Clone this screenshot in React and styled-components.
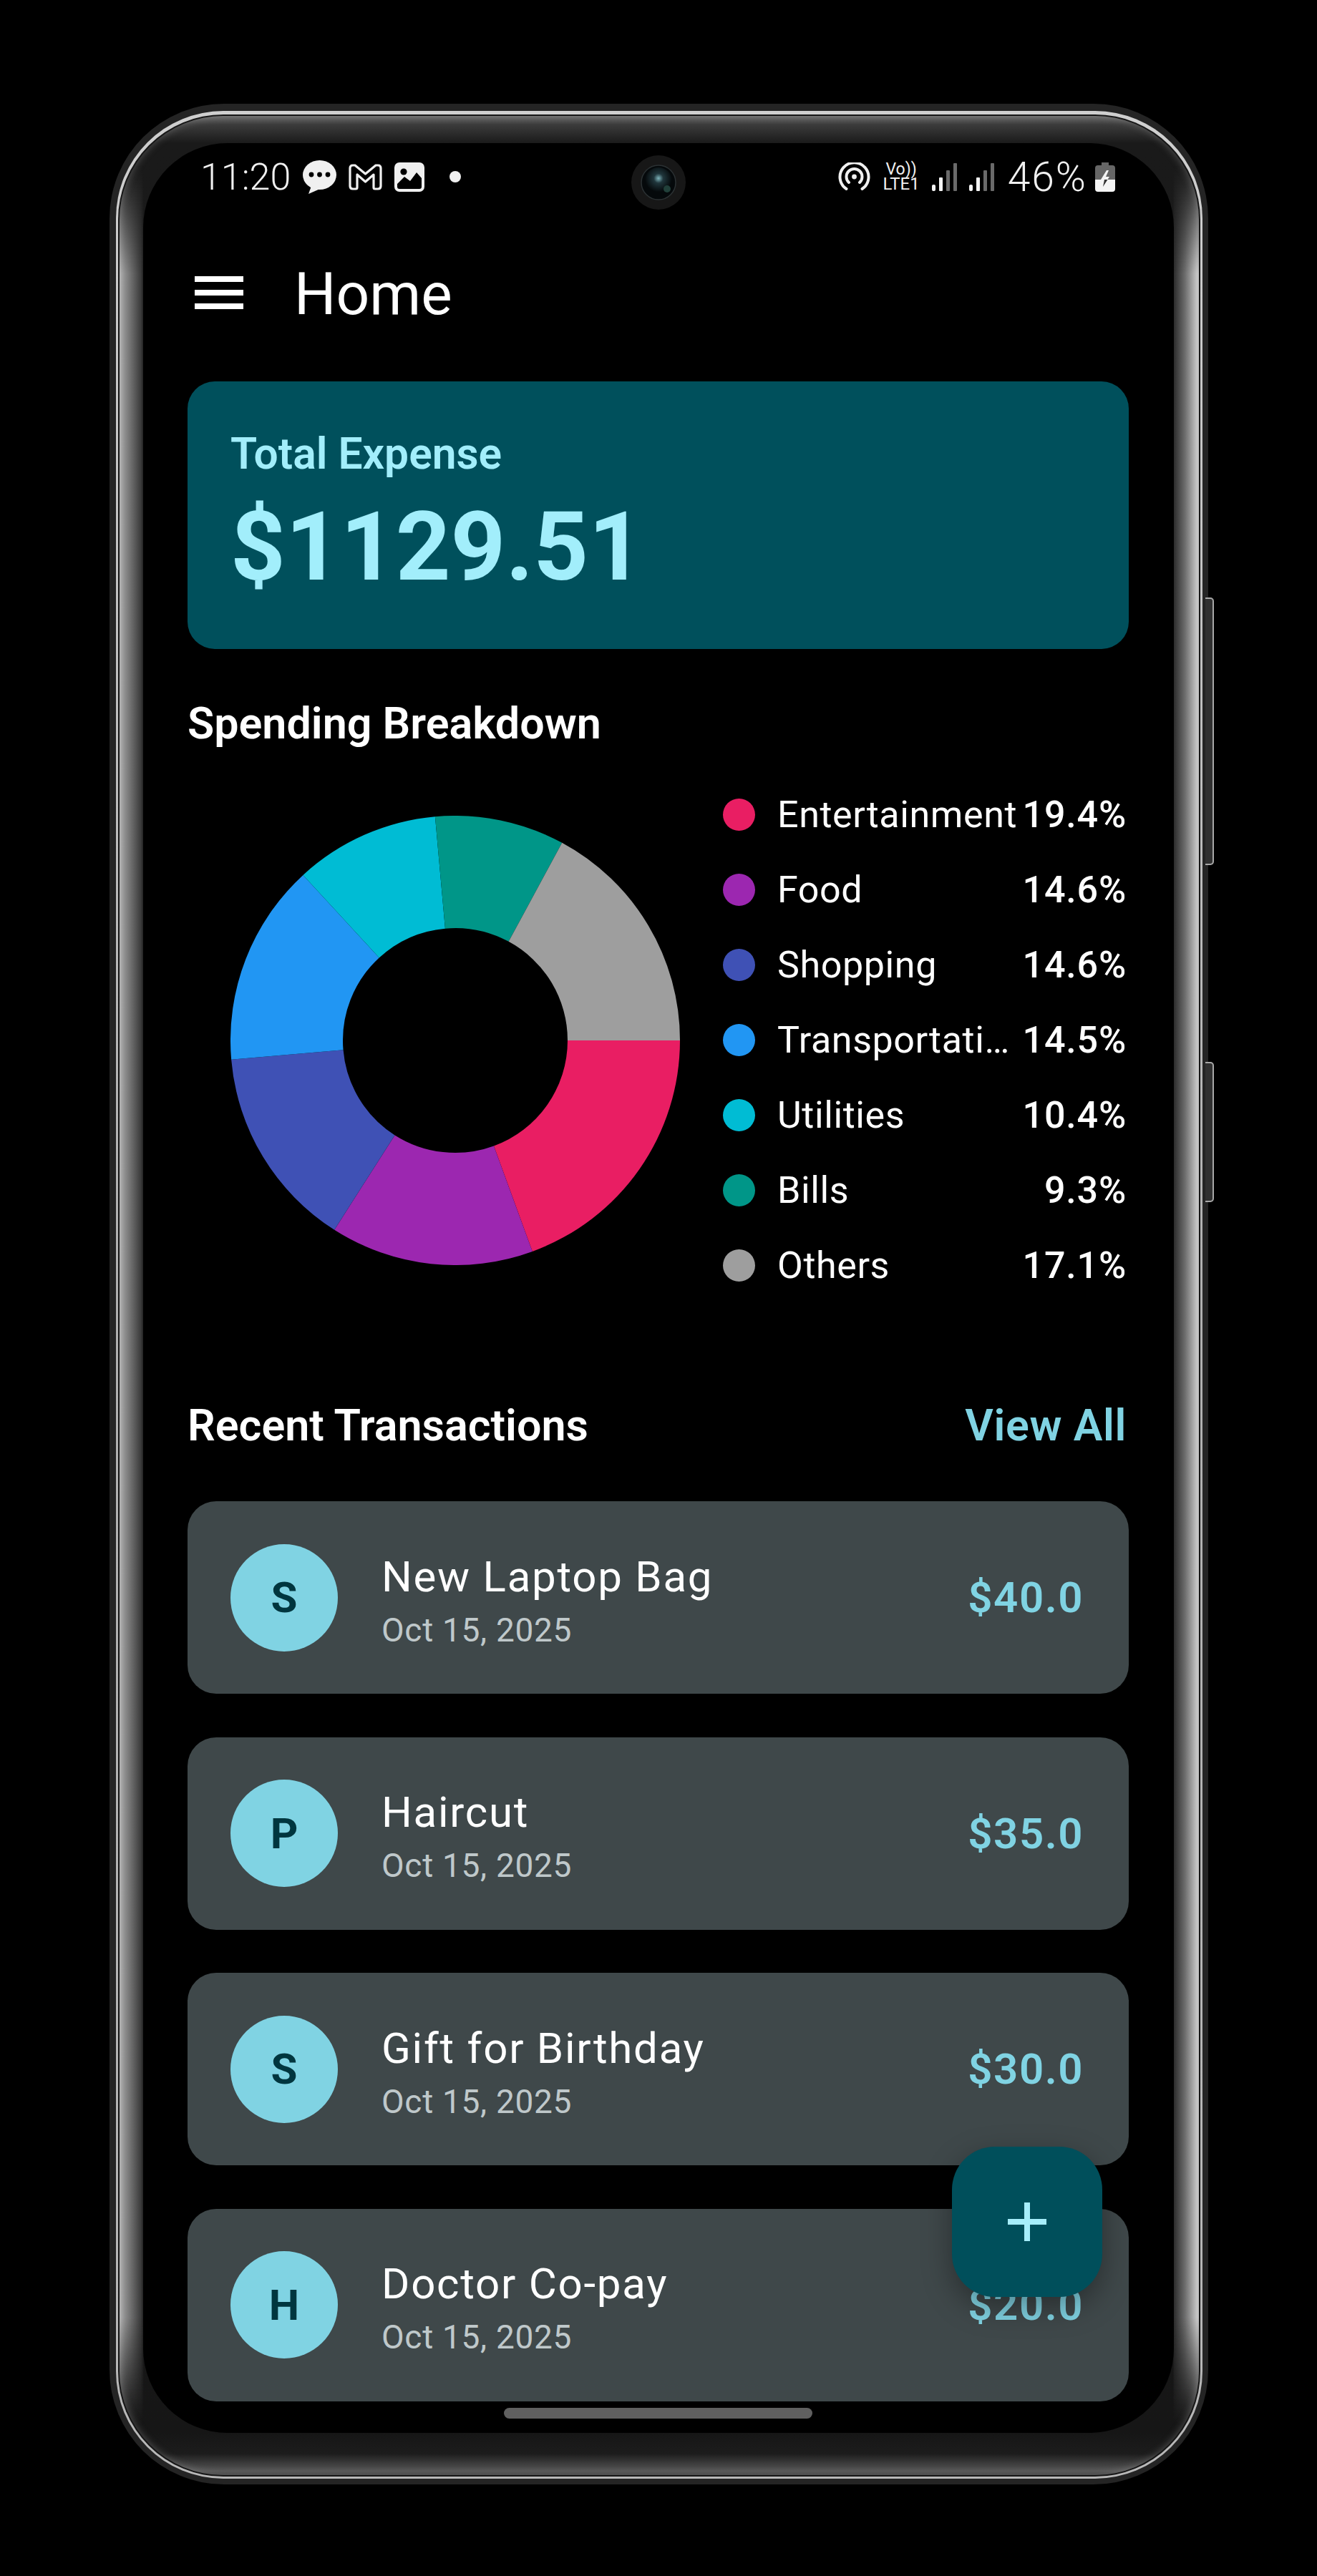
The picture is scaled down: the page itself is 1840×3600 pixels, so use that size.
import React from "react";
import styled, { createGlobalStyle } from "styled-components";

const categories = [
    { name: "Entertainment", pct: 19.4, color: "#e91e63" },
    { name: "Food", pct: 14.6, color: "#9c27b0" },
    { name: "Shopping", pct: 14.6, color: "#3f51b5" },
    { name: "Transportation", pct: 14.5, color: "#2196f3" },
    { name: "Utilities", pct: 10.4, color: "#00bcd4" },
    { name: "Bills", pct: 9.3, color: "#009688" },
    { name: "Others", pct: 17.1, color: "#9e9e9e" },
];

const transactions = [
    { letter: "S", title: "New Laptop Bag", amount: "$40.0" },
    { letter: "P", title: "Haircut", amount: "$35.0" },
    { letter: "S", title: "Gift for Birthday", amount: "$30.0" },
    { letter: "H", title: "Doctor Co-pay", amount: "$20.0" },
];

const polar = (r, deg) => {
    const rad = (deg * Math.PI) / 180;
    return [314 + r * Math.cos(rad), 314 + r * Math.sin(rad)];
};

const slicePath = (from, to) => {
    const [x1, y1] = polar(314, from);
    const [x2, y2] = polar(314, to);
    const [x3, y3] = polar(157, to);
    const [x4, y4] = polar(157, from);
    const large = to - from > 180 ? 1 : 0;
    return `M${x1} ${y1}A314 314 0 ${large} 1 ${x2} ${y2}L${x3} ${y3}A157 157 0 ${large} 0 ${x4} ${y4}Z`;
};

const Donut = () => {
    const total = categories.reduce((sum, c) => sum + c.pct, 0);
    let angle = 0;
    return (
        <PieSvg viewBox="0 0 628 628">
            {categories.map(c => {
                const from = angle;
                angle += (c.pct / total) * 360;
                return <path key={c.name} d={slicePath(from, angle)} fill={c.color} />;
            })}
        </PieSvg>
    );
};

const Bubble = () => (
    <svg width="47" height="47" viewBox="0 0 47 47">
        <ellipse cx="23.5" cy="20.5" rx="23.5" ry="20.5" fill="#f0f0f0" />
        <path d="M12 36L8 47L24 40Z" fill="#f0f0f0" />
        <circle cx="12" cy="20" r="3.4" fill="#000" />
        <circle cx="23.5" cy="20" r="3.4" fill="#000" />
        <circle cx="35" cy="20" r="3.4" fill="#000" />
    </svg>
);

const GmailMark = () => (
    <svg width="47" height="37" viewBox="0 0 47 37">
        <path
            d="M2 6Q2 2 6 2H9L23.5 14L38 2H41Q45 2 45 6V31Q45 35 41 35H37Q35 35 35 33V15L23.5 25L12 15V33Q12 35 10 35H6Q2 35 2 31Z"
            fill="none"
            stroke="#f0f0f0"
            strokeWidth="3.2"
            strokeLinejoin="round"
        />
    </svg>
);

const PictureIcon = () => (
    <svg width="42" height="41" viewBox="0 0 42 41">
        <rect width="42" height="41" rx="7" fill="#f0f0f0" />
        <circle cx="13" cy="13" r="4.6" fill="#000" />
        <path d="M4 30L14 20L22 26L31 14L38 22V34Q38 37 35 37H7Q4 37 4 34Z" fill="#000" />
        <path d="M5 32H37V36H5Z" fill="#000" />
    </svg>
);

const RadioIcon = () => (
    <svg width="45" height="40" viewBox="0 0 45 40" fill="none" stroke="#f0f0f0" strokeWidth="4" strokeLinecap="round">
        <path d="M11.5 37A20 20 0 1 1 33.5 37" />
        <path d="M15 28A11 11 0 1 1 30 28" />
        <circle cx="22.5" cy="20" r="3.4" fill="#f0f0f0" stroke="none" />
    </svg>
);

const SignalIcon = () => (
    <svg width="35" height="39" viewBox="0 0 35 39">
        <rect x="0" y="30" width="5" height="9" rx="2" fill="#f4f4f4" />
        <rect x="10" y="20" width="5" height="19" rx="1" fill="#f4f4f4" />
        <rect x="20" y="10" width="5" height="29" rx="1" fill="#6a6a6a" />
        <rect x="30" y="0" width="5" height="39" rx="1" fill="#6a6a6a" />
    </svg>
);

const BatteryIcon = () => (
    <svg width="28" height="41" viewBox="0 0 28 41">
        <defs>
            <linearGradient id="battFill" x1="0" y1="0" x2="0" y2="1">
                <stop offset="0.58" stopColor="#666" />
                <stop offset="0.58" stopColor="#f4f4f4" />
            </linearGradient>
            <linearGradient id="boltFill" gradientUnits="userSpaceOnUse" x1="0" y1="0" x2="0" y2="41">
                <stop offset="0.58" stopColor="#f4f4f4" />
                <stop offset="0.58" stopColor="#333" />
            </linearGradient>
        </defs>
        <path d="M9 0H19V4H24Q28 4 28 8V37Q28 41 24 41H4Q0 41 0 37V8Q0 4 4 4H9Z" fill="url(#battFill)" />
        <path d="M16 11L8 24H13L11 34L20 20H15L19 11Z" fill="url(#boltFill)" />
    </svg>
);

const CameraLens = () => (
    <CameraSvg viewBox="0 0 76 76">
        <defs>
            <radialGradient id="lensGlow" cx="0.5" cy="0.4" r="0.5">
                <stop offset="0" stopColor="#7fb6bd" />
                <stop offset="0.35" stopColor="#20363c" />
                <stop offset="1" stopColor="#05090b" />
            </radialGradient>
        </defs>
        <circle cx="38" cy="38" r="38" fill="#171717" />
        <circle cx="38" cy="38" r="24" fill="#05090b" stroke="#2b3133" strokeWidth="1.5" />
        <circle cx="38" cy="36" r="19" fill="url(#lensGlow)" />
        <circle cx="50" cy="47" r="5" fill="#21403a" />
    </CameraSvg>
);

const App = () => (
    <>
        <GlobalStyle />
        <Page>
            <Device>
                <SideKey $top={690} $height={374} />
                <SideKey $top={1339} $height={196} />
                <Rim>
                    <Groove>
                        <Bezel>
                            <Screen>
                                <StatusBar>
                                    <StatusGroup>
                                        <Clock>11:20</Clock>
                                        <Bubble />
                                        <GmailMark />
                                        <PictureIcon />
                                        <NoticeDot />
                                    </StatusGroup>
                                    <StatusGroup>
                                        <RadioIcon />
                                        <Volte>
                                            <VolteTop>Vo))</VolteTop>
                                            <VolteBottom>LTE1</VolteBottom>
                                        </Volte>
                                        <SignalIcon />
                                        <SignalIcon />
                                        <BatteryText>46%</BatteryText>
                                        <BatteryIcon />
                                    </StatusGroup>
                                </StatusBar>
                                <CameraLens />

                                <TopBar>
                                    <Burger>
                                        <span />
                                        <span />
                                        <span />
                                    </Burger>
                                    <PageTitle>Home</PageTitle>
                                </TopBar>

                                <Content>
                                    <TotalCard>
                                        <TotalLabel>Total Expense</TotalLabel>
                                        <TotalValue>$1129.51</TotalValue>
                                    </TotalCard>

                                    <SectionRow $top={69}>
                                        <SectionTitle>Spending Breakdown</SectionTitle>
                                    </SectionRow>

                                    <ChartRow>
                                        <Donut />
                                        <Legend>
                                            {categories.map(c => (
                                                <LegendRow key={c.name}>
                                                    <LegendDot $color={c.color} />
                                                    <LegendName>{c.name}</LegendName>
                                                    <LegendPct>{c.pct}%</LegendPct>
                                                </LegendRow>
                                            ))}
                                        </Legend>
                                    </ChartRow>

                                    <SectionRow $top={136}>
                                        <SectionTitle>Recent Transactions</SectionTitle>
                                        <ViewAll>View All</ViewAll>
                                    </SectionRow>

                                    <TxList>
                                        {transactions.map(t => (
                                            <TxCard key={t.title}>
                                                <Avatar>{t.letter}</Avatar>
                                                <TxBody>
                                                    <TxTitle>{t.title}</TxTitle>
                                                    <TxDate>Oct 15, 2025</TxDate>
                                                </TxBody>
                                                <TxAmount>{t.amount}</TxAmount>
                                            </TxCard>
                                        ))}
                                    </TxList>
                                </Content>

                                <Fab>
                                    <svg width="54" height="54" viewBox="0 0 54 54">
                                        <path d="M23 0H31V23H54V31H31V54H23V31H0V23H23Z" fill="#a6eefb" />
                                    </svg>
                                </Fab>
                                <GestureBar />
                            </Screen>
                        </Bezel>
                    </Groove>
                </Rim>
            </Device>
        </Page>
    </>
);

export default App;

const GlobalStyle = createGlobalStyle`
    html, body {
        margin: 0;
        background: #000;
    }
    * {
        box-sizing: border-box;
    }
`;

const Page = styled.div`
    width: 1840px;
    height: 3600px;
    padding: 145px 0 0 153px;
    background: #000;
    font-family: Roboto, "Liberation Sans", sans-serif;
    color: #fff;
`;

const Device = styled.div`
    position: relative;
    width: 1535px;
    height: 3327px;
    padding: 10px 8px 8px 9px;
    border-radius: 160px;
    background: #242424;
`;

const SideKey = styled.div`
    position: absolute;
    top: ${({ $top }) => $top}px;
    right: -8px;
    width: 12px;
    height: ${({ $height }) => $height}px;
    background: #303030;
    border: 2px solid #a8a8a8;
    border-left: none;
    border-radius: 0 5px 5px 0;
`;

const Rim = styled.div`
    display: flex;
    height: 100%;
    padding: 5px 3px 3px;
    border-radius: 150px;
    background: linear-gradient(180deg, #cfcfcf, #b0b0b0 50%, #b8b8b8);
`;

const Groove = styled.div`
    display: flex;
    flex: 1;
    padding: 2px;
    border-radius: 147px;
    background: #161616;
`;

const Bezel = styled.div`
    position: relative;
    flex: 1;
    padding: 38px 35px 59px 33px;
    border-radius: 145px;
    overflow: hidden;
    background: linear-gradient(
        180deg,
        #666 0,
        #3c3c3c 12px,
        #1a1a1a 38px,
        #161616 calc(100% - 59px),
        #1c1c1c calc(100% - 30px),
        #555 calc(100% - 6px),
        #3a3a3a 100%
    );
    box-shadow: inset 0 0 12px rgba(170, 170, 170, 0.4);

    &::before {
        content: "";
        position: absolute;
        inset: 0;
        background: linear-gradient(
            90deg,
            #b4b4b4 0,
            #8c8c8c 8px,
            #3a3a3a 30px,
            #222 33px,
            transparent 34px,
            transparent calc(100% - 36px),
            #2c2c2c calc(100% - 35px),
            #6a6a6a calc(100% - 20px),
            #c4c4c4 calc(100% - 3px),
            #c4c4c4 100%
        );
        mask-image: linear-gradient(
            180deg,
            transparent 70px,
            #000 220px,
            #000 calc(100% - 220px),
            transparent calc(100% - 70px)
        );
    }
`;

const Screen = styled.div`
    position: relative;
    z-index: 1;
    width: 1440px;
    height: 3200px;
    border-radius: 118px;
    overflow: hidden;
    background: #000;
`;

const StatusBar = styled.div`
    display: flex;
    justify-content: space-between;
    align-items: center;
    height: 94px;
    padding: 0 82px 0 80px;
`;

const StatusGroup = styled.div`
    display: flex;
    align-items: center;
    gap: 17px;
`;

const Clock = styled.span`
    font-size: 52px;
    font-weight: 300;
    color: #f0f0f0;
`;

const NoticeDot = styled.span`
    width: 16px;
    height: 16px;
    margin-left: 18px;
    border-radius: 50%;
    background: #f0f0f0;
`;

const Volte = styled.div`
    display: flex;
    flex-direction: column;
    align-items: center;
    color: #f0f0f0;
`;

const VolteTop = styled.span`
    font-size: 23px;
    line-height: 20px;
`;

const VolteBottom = styled.span`
    font-size: 24px;
    line-height: 21px;
`;

const BatteryText = styled.span`
    margin-left: 2px;
    margin-right: -6px;
    font-size: 57px;
    font-weight: 300;
    letter-spacing: 2px;
    color: #f0f0f0;
`;

const CameraSvg = styled.svg`
    position: absolute;
    top: 17px;
    left: 682px;
    width: 76px;
    height: 76px;
`;

const TopBar = styled.header`
    display: flex;
    align-items: center;
    height: 230px;
    padding-left: 72px;
`;

const Burger = styled.div`
    display: flex;
    flex-direction: column;
    gap: 11px;
    span {
        display: block;
        width: 68px;
        height: 8px;
        background: #fff;
    }
`;

const PageTitle = styled.h1`
    margin: 4px 0 0 71px;
    font-size: 82px;
    font-weight: 400;
`;

const Content = styled.main`
    padding: 9px 63px 0 62px;
`;

const TotalCard = styled.section`
    display: flex;
    flex-direction: column;
    justify-content: center;
    gap: 20px;
    height: 374px;
    padding: 0 60px;
    border-radius: 38px;
    background: #00505c;
    color: #a2eefb;
`;

const TotalLabel = styled.div`
    font-size: 60.5px;
    font-weight: 600;
    line-height: 70px;
`;

const TotalValue = styled.div`
    font-size: 134px;
    font-weight: 700;
    line-height: 150px;
`;

const SectionRow = styled.div`
    display: flex;
    justify-content: space-between;
    align-items: center;
    height: 70px;
    margin-top: ${({ $top }) => $top}px;
`;

const SectionTitle = styled.h2`
    margin: 0;
    font-size: 61px;
    font-weight: 600;
`;

const ViewAll = styled.span`
    padding-right: 3px;
    font-size: 61px;
    font-weight: 600;
    letter-spacing: 0.6px;
    color: #80d3e3;
`;

const ChartRow = styled.div`
    display: flex;
    align-items: center;
    gap: 60px;
    margin-top: 40px;
    padding-left: 60px;
`;

const PieSvg = styled.svg`
    flex: none;
    width: 628px;
    height: 628px;
`;

const Legend = styled.div`
    flex: 1;
    min-width: 0;
`;

const LegendRow = styled.div`
    display: flex;
    align-items: center;
    height: 105px;
    padding-right: 3px;
`;

const LegendDot = styled.span`
    flex: none;
    width: 45px;
    height: 45px;
    border-radius: 50%;
    background: ${({ $color }) => $color};
`;

const LegendName = styled.span`
    flex: none;
    width: 336px;
    margin-left: 31px;
    font-size: 52px;
    letter-spacing: 0.6px;
    white-space: nowrap;
    overflow: hidden;
    text-overflow: ellipsis;
`;

const LegendPct = styled.span`
    flex: 1;
    text-align: right;
    white-space: nowrap;
    font-size: 52px;
    font-weight: 500;
    letter-spacing: 0.8px;
`;

const TxList = styled.div`
    display: flex;
    flex-direction: column;
    gap: 60.5px;
    margin-top: 71px;
`;

const TxCard = styled.article`
    display: flex;
    align-items: center;
    height: 269px;
    padding: 0 63px 0 60px;
    border-radius: 40px;
    background: #3f484a;
`;

const Avatar = styled.div`
    display: flex;
    flex: none;
    align-items: center;
    justify-content: center;
    width: 150px;
    height: 150px;
    border-radius: 50%;
    background: #80d3e3;
    color: #00363f;
    font-size: 60px;
    font-weight: 700;
`;

const TxBody = styled.div`
    flex: 1;
    margin-left: 61px;
    padding-top: 16px;
`;

const TxTitle = styled.div`
    font-size: 60px;
    line-height: 75px;
    letter-spacing: 1.75px;
`;

const TxDate = styled.div`
    font-size: 46px;
    line-height: 75px;
    letter-spacing: 0.7px;
    color: #bfc8ca;
`;

const TxAmount = styled.div`
    font-size: 60px;
    font-weight: 600;
    letter-spacing: 1.5px;
    color: #80d3e3;
`;

const Fab = styled.button`
    position: absolute;
    right: 100px;
    bottom: 190px;
    display: flex;
    align-items: center;
    justify-content: center;
    width: 210px;
    height: 210px;
    border: none;
    border-radius: 60px;
    background: #004f5b;
    box-shadow: 0 14px 40px rgba(0, 0, 0, 0.35);
`;

const GestureBar = styled.div`
    position: absolute;
    left: 504px;
    bottom: 20px;
    width: 431px;
    height: 15px;
    border-radius: 8px;
    background: #606060;
`;
